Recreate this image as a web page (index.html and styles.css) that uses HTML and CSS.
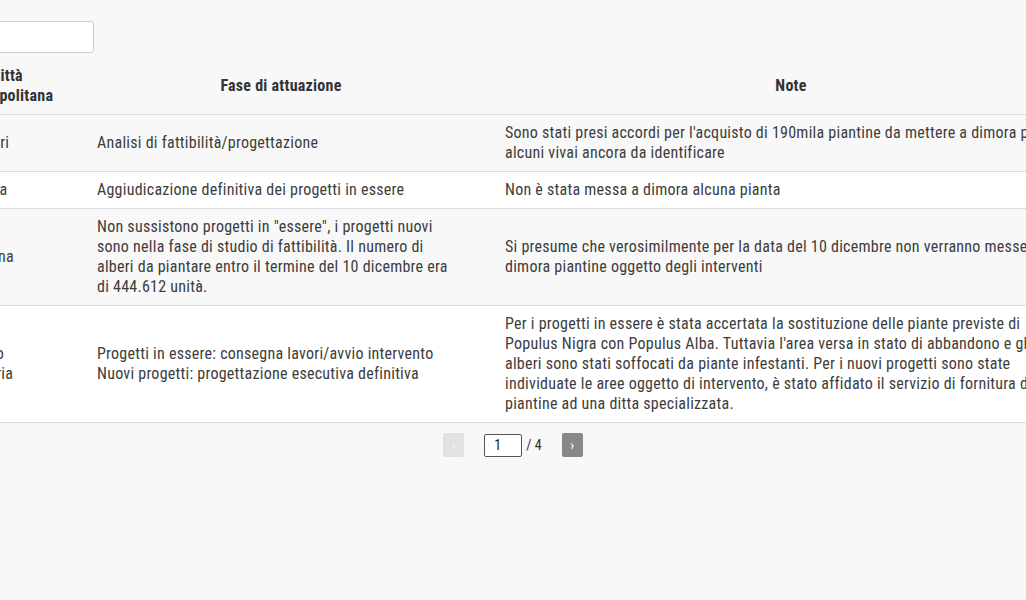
FILE: index.html
```html
<!DOCTYPE html>
<html lang="it">
<head>
<meta charset="utf-8">
<title>Alberi</title>
<link rel="stylesheet" href="styles.css">
</head>
<body>
<div class="viewport">
  <div class="sheet">
    <div class="search"><input class="search-input" type="text"></div>
    <table class="data">
      <colgroup><col class="c1"><col class="c2"><col class="c3"></colgroup>
      <thead>
        <tr><th>Città metropolitana</th><th>Fase di attuazione</th><th>Note</th></tr>
      </thead>
      <tbody>
        <tr class="odd"><td>Cagliari</td><td>Analisi di fattibilità/progettazione</td><td>Sono stati presi accordi per l'acquisto di 190mila piantine da mettere a dimora presso alcuni vivai ancora da identificare</td></tr>
        <tr class="even"><td>Genova</td><td>Aggiudicazione definitiva dei progetti in essere</td><td>Non è stata messa a dimora alcuna pianta</td></tr>
        <tr class="odd"><td>Messina</td><td>Non sussistono progetti in "essere", i progetti nuovi sono nella fase di studio di fattibilità. Il numero di alberi da piantare entro il termine del 10 dicembre era di 444.612 unità.</td><td>Si presume che verosimilmente per la data del 10 dicembre non verranno messe a dimora piantine oggetto degli interventi</td></tr>
        <tr class="even"><td>Reggio Calabria</td><td>Progetti in essere: consegna lavori/avvio intervento<br>Nuovi progetti: progettazione esecutiva definitiva</td><td>Per i progetti in essere è stata accertata la sostituzione delle piante previste di Populus Nigra con Populus Alba. Tuttavia l'area versa in stato di abbandono e gli alberi sono stati soffocati da piante infestanti. Per i nuovi progetti sono state individuate le aree oggetto di intervento, è stato affidato il servizio di fornitura di piantine ad una ditta specializzata.</td></tr>
      </tbody>
    </table>
  </div>
  <div class="pager">
    <span class="pbtn pbtn-off">&lsaquo;</span>
    <input class="page-input" type="text" value="1">
    <span class="total">/ 4</span>
    <span class="pbtn pbtn-on">&rsaquo;</span>
  </div>
</div>
</body>
</html>
```
FILE: styles.css
```css
html, body {
  margin: 0;
  padding: 0;
  background: #f8f8f8;
}
body {
  font-family: "Roboto", "Liberation Sans", sans-serif;
  font-stretch: 75%;
  font-size: 16px;
  letter-spacing: 0.25px;
  line-height: 20px;
  color: #3d3d3d;
}
.viewport {
  width: 1026px;
  height: 600px;
  overflow: hidden;
}
.sheet {
  margin-left: -53px;
  width: 1150px;
}
.search {
  padding-top: 21px;
  margin-bottom: 5px;
}
.search-input {
  box-sizing: border-box;
  width: 147px;
  height: 32px;
  border: 1px solid #cccccc;
  border-radius: 3px;
  background: #fff;
  margin: 0;
  display: block;
}
.data {
  border-collapse: collapse;
  table-layout: fixed;
  width: 1150px;
}
.c1 { width: 130px; }
.c2 { width: 408px; }
.c3 { width: 612px; }
.data th {
  font-weight: 700;
  color: #333;
  text-align: center;
  padding: 8px 20px;
  border-bottom: 1px solid #dddddd;
}
.data th:first-child { padding: 8px 22px 8px 12px; }
.data td {
  text-align: left;
  vertical-align: middle;
  padding: 8px 32px 8px 20px;
  border-bottom: 1px solid #dddddd;
}
.data td:first-child { padding-left: 12px; }
.data tr.even td { background: #ffffff; }
.data tr.odd td { background: #f8f8f8; }
.pager {
  display: flex;
  justify-content: center;
  align-items: center;
  margin-top: 10px;
  font-size: 14px;
  letter-spacing: 0;
}
.pbtn {
  width: 21px;
  height: 24px;
  border-radius: 2px;
  display: flex;
  align-items: center;
  justify-content: center;
  font-size: 14px;
  color: #fff;
}
.pbtn-off { background: #e2e2e2; color: #f4f4f4; margin-right: 20px; }
.pbtn-on { background: #888888; margin-left: 20px; }
.page-input {
  box-sizing: border-box;
  width: 38px;
  height: 23px;
  border: 1px solid #555;
  border-radius: 2px;
  background: #fff;
  margin: 0;
  padding: 0 0 0 9px;
  font: inherit;
  color: #222;
}
.total { margin-left: 4px; color: #333; }
```
